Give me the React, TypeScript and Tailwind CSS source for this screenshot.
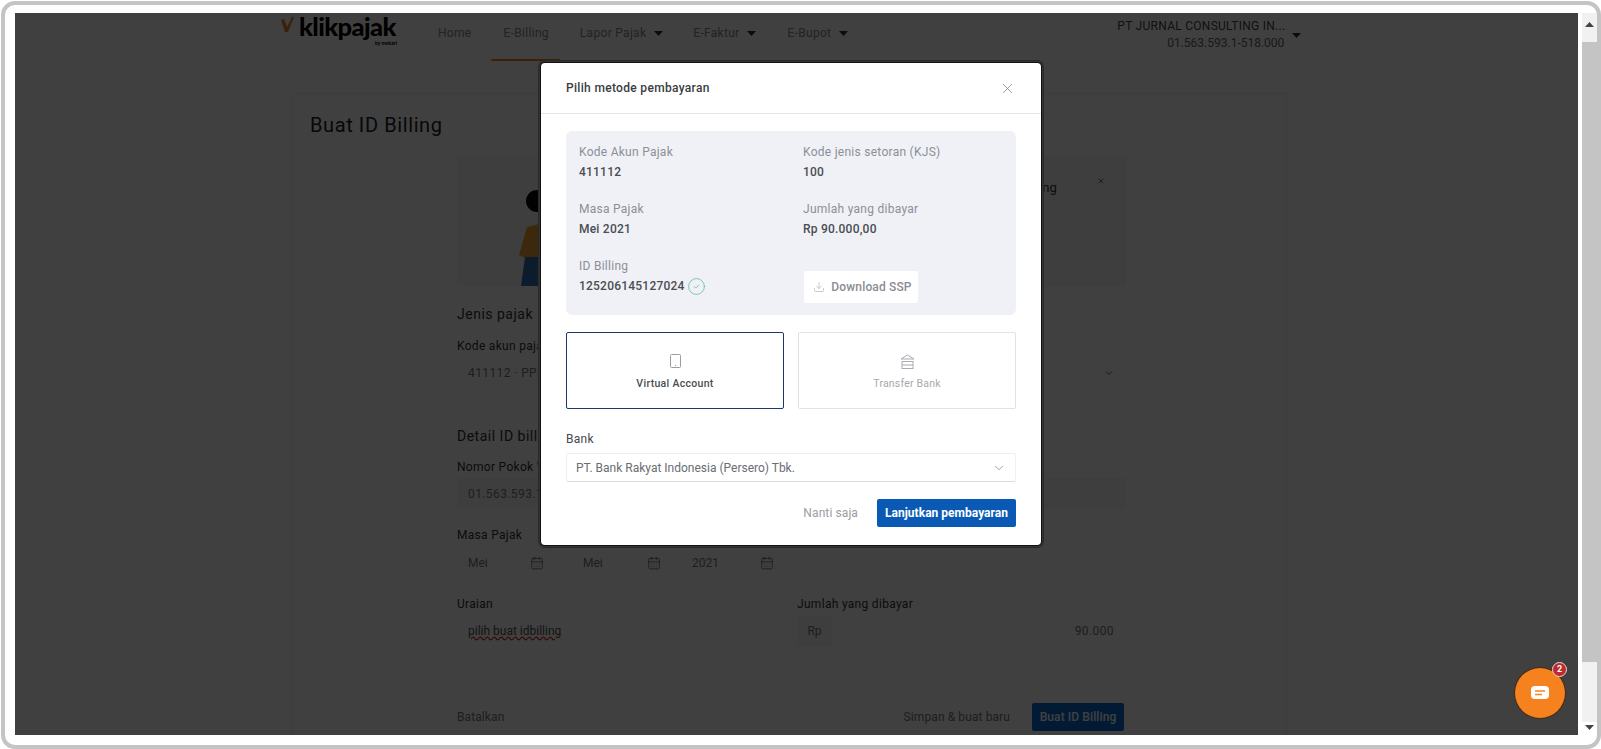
import React from "react";
import { X, ChevronDown, CircleCheck, CalendarDays, Download } from "lucide-react";

function Caret() {
  return (
    <svg width="9" height="5" viewBox="0 0 9 5" className="ml-[8px]">
      <path d="M0 0h9L4.5 5z" fill="#333" />
    </svg>
  );
}

function DateField({ text, cls }: { text: string; cls: string }) {
  return (
    <div className={"flex h-[32px] items-center justify-between pl-[11px] text-[12px] text-[#777] " + cls}>
      <span>{text}</span>
      <CalendarDays size={14} strokeWidth={1.2} color="#555" />
    </div>
  );
}

function Info({ label, value, extra }: { label: string; value: string; extra?: React.ReactNode }) {
  return (
    <div className="flex flex-col gap-[4px]">
      <div className="h-[16px] text-[12px] leading-[16px] tracking-[0.27px] text-[#8b8f98]">{label}</div>
      <div className="flex h-[16px] items-center text-[12px] font-medium leading-[16px] tracking-[0.22px] text-[#4a4d52]">
        {value}
        {extra}
      </div>
    </div>
  );
}

function PageContent() {
  return (
    <div className="flex h-full flex-col text-[#333]">
      <header className="flex h-[48px] shrink-0 items-start pl-[266px]">
        <div className="relative flex h-[40px] w-[121px] shrink-0 items-start">
          <svg width="13" height="16" viewBox="0 0 13 16" className="mt-[4px]">
            <path d="M0 3l3-1 3 8L11 0h2L7 15H4z" fill="#e8832a" />
          </svg>
          <span className="ml-[5px] font-['Lato',sans-serif] text-[25.5px] font-black leading-[27px] tracking-[-0.6px] text-black">klikpajak</span>
          <span className="absolute right-[5px] top-[27px] text-[5px] font-bold leading-[6px] text-[#222]">by mekari</span>
        </div>
        <nav className="ml-[36px] flex h-[48px] items-start pt-[12px] text-[12px] tracking-[0.3px] text-[#8a8a8a]">
          <span className="leading-[16px]">Home</span>
          <span className="relative ml-[32px] leading-[16px]">
            E-Billing
            <span className="absolute left-[-13px] right-[-11px] top-[34px] h-[2px] rounded-full bg-[#f08020]" />
          </span>
          <span className="ml-[31px] flex items-center leading-[16px]">Lapor Pajak<Caret /></span>
          <span className="ml-[30px] flex items-center leading-[16px]">E-Faktur<Caret /></span>
          <span className="ml-[31px] flex items-center leading-[16px]">E-Bupot<Caret /></span>
        </nav>
        <div className="ml-[269px] flex items-center pt-[5px]">
          <div className="w-[167px] text-right text-[12px] leading-[17px] tracking-[0.27px] text-[#444]">
            <div className="text-left whitespace-nowrap">PT JURNAL CONSULTING IN...</div>
            <div className="tracking-[0px] text-[#666]">01.563.593.1-518.000</div>
          </div>
          <Caret />
        </div>
      </header>

      <div className="ml-[277px] mt-[32px] flex w-[995px] flex-1 flex-col border-x border-t border-[#f0f0f0]">
        <h1 className="ml-[17px] mt-[18px] text-[20px] font-normal leading-[26px] tracking-[0.6px] text-[#222]">Buat ID Billing</h1>
        <div className="ml-[164px] mt-[19px] flex w-[669px] flex-col">
          <div className="relative flex h-[129px] items-start overflow-hidden bg-[#f8f8f8]">
            <svg width="90" height="129" viewBox="0 0 90 129" className="shrink-0">
              <circle cx="80" cy="44" r="11" fill="#0a0a0a" />
              <path d="M70 70l20-5v37H70l-8-4z" fill="#f0a030" />
              <path d="M68 100h22v29H64z" fill="#2d6fb5" />
            </svg>
            <div className="ml-[370px] mt-[22px] whitespace-nowrap text-[13px] leading-[18px] text-[#333]">Lihat cara buat ID Billing</div>
            <X size={8} className="absolute right-[21px] top-[20px]" color="#333" />
          </div>

          <div className="mt-[19px] text-[14px] leading-[18px] tracking-[0.5px] text-[#333]">Jenis pajak</div>
          <div className="mt-[15px] text-[12px] leading-[16px] tracking-[0.3px] text-[#333]">Kode akun pajak</div>
          <div className="mt-[3px] flex h-[32px] items-center justify-between pl-[11px] pr-[11px] text-[12px] tracking-[0.4px] text-[#777]">
            <span>411112 · PPN Dalam Negeri</span>
            <ChevronDown size={12} color="#666" />
          </div>

          <div className="mt-[38px] text-[14px] leading-[18px] tracking-[0.5px] text-[#333]">Detail ID billing</div>
          <div className="mt-[14px] text-[12px] leading-[16px] tracking-[0.3px] text-[#333]">Nomor Pokok Wajib Pajak</div>
          <div className="mt-[3px] grid h-[31px] grid-cols-[324px_328px] gap-[16px]">
            <div className="flex items-center bg-[#f8f8f8] pl-[11px] text-[12px] tracking-[0.4px] text-[#777]">01.563.593.1-518.000</div>
            <div className="bg-[#f8f8f8]" />
          </div>

          <div className="mt-[18px] text-[12px] leading-[16px] tracking-[0.3px] text-[#333]">Masa Pajak</div>
          <div className="mt-[4px] flex">
            <DateField text="Mei" cls="w-[87px] mr-[28px]" />
            <DateField text="Mei" cls="w-[89px] mr-[20px]" />
            <DateField text="2021" cls="w-[93px]" />
          </div>

          <div className="mt-[17px] grid grid-cols-[324px_328px] gap-[16px]">
            <div>
              <div className="text-[12px] leading-[16px] tracking-[0.3px] text-[#333]">Uraian</div>
              <div className="mt-[4px] flex h-[30px] items-center pl-[11px] text-[12px] text-[#555] underline decoration-[#d02020] decoration-wavy">pilih buat idbilling</div>
            </div>
            <div>
              <div className="text-[12px] leading-[16px] tracking-[0.3px] text-[#333]">Jumlah yang dibayar</div>
              <div className="mt-[4px] flex h-[30px] items-center text-[12px] text-[#777]">
                <div className="flex h-full w-[35px] items-center justify-center bg-[#f6f6f6]">Rp</div>
                <div className="flex-1 pr-[11px] text-right tracking-[0.4px]">90.000</div>
              </div>
            </div>
          </div>

          <div className="mt-[57px] flex items-center pr-[2px] text-[12px] tracking-[0.1px] text-[#777]">
            <span>Batalkan</span>
            <span className="ml-auto">Simpan &amp; buat baru</span>
            <span className="ml-[22px] flex h-[28px] w-[92px] items-center justify-center rounded-[2px] bg-[#0a6ad0] font-medium text-white">Buat ID Billing</span>
          </div>
        </div>
      </div>
    </div>
  );
}

function Modal() {
  return (
    <div className="absolute left-[526px] top-[50px] flex h-[482px] w-[500px] flex-col rounded-[4px] bg-white shadow-[0_0_0_1px_#111,0_0_0_2px_#333,0_0_0_3px_#2a2a2a]">
      <div className="flex h-[51px] shrink-0 items-center justify-between border-b border-[#e4e4e6] pl-[25px] pr-[25px]">
        <span className="text-[12px] font-medium tracking-[0.32px] text-[#3a3d42]">Pilih metode pembayaran</span>
        <X size={17} strokeWidth={1} color="#777" />
      </div>
      <div className="flex flex-1 flex-col px-[25px] pt-[17px]">
        <div className="grid h-[184px] grid-cols-[224px_1fr] content-start gap-y-[21px] rounded-[6px] bg-[#f0f1f6] pl-[13px] pt-[13px]">
          <Info label="Kode Akun Pajak" value="411112" />
          <Info label="Kode jenis setoran (KJS)" value="100" />
          <Info label="Masa Pajak" value="Mei 2021" />
          <Info label="Jumlah yang dibayar" value="Rp 90.000,00" />
          <Info
            label="ID Billing"
            value="125206145127024"
            extra={<CircleCheck size={19} strokeWidth={0.9} color="#4fb39a" className="ml-[2px] shrink-0" />}
          />
          <div className="ml-[1px] mt-[13px] flex h-[32px] w-[114px] items-center justify-center gap-[6px] rounded-[2px] bg-white pl-[3px] text-[12px] font-medium tracking-[0.15px] text-[#8a8d93]">
            <Download size={12} strokeWidth={1} color="#999" />
            Download SSP
          </div>
        </div>

        <div className="mt-[17px] grid h-[77px] grid-cols-[218px_218px] gap-[14px]">
          <div className="flex flex-col items-center justify-center gap-[9px] rounded-[2px] border-[1.5px] border-[#1b3a6b] pt-[4px]">
            <svg width="11" height="14" viewBox="0 0 11 14" fill="none" stroke="#9a9da2" strokeWidth="1">
              <rect x="0.5" y="0.5" width="10" height="13" rx="1" />
              <path d="M5 11.5h1" />
            </svg>
            <span className="text-[10.5px] font-medium leading-[14px] tracking-[0.3px] text-[#4a4d52]">Virtual Account</span>
          </div>
          <div className="flex flex-col items-center justify-center gap-[8px] rounded-[2px] border-[1.5px] border-[#e2e2e4] pt-[4px]">
            <svg width="15" height="15" viewBox="0 0 15 15" fill="none" stroke="#a8abb0" strokeWidth="1">
              <path d="M1 5 7.5 1 14 5z" />
              <rect x="2" y="7.5" width="11" height="7" />
              <path d="M2 11h11" />
            </svg>
            <span className="text-[10.5px] leading-[14px] tracking-[0.2px] text-[#a6a9ae]">Transfer Bank</span>
          </div>
        </div>

        <div className="mt-[22px] text-[12px] leading-[16px] tracking-[0.3px] text-[#44474c]">Bank</div>
        <div className="mt-[6px] flex h-[29px] items-center justify-between rounded-[2px] border border-[#f0f0f2] border-b-[#dcdcde] pl-[9px] pr-[9px] text-[12px] text-[#6a6d73]">
          <span>PT. Bank Rakyat Indonesia (Persero) Tbk.</span>
          <ChevronDown size={14} strokeWidth={1.2} color="#777" />
        </div>
        <div className="mt-[17px] flex items-center justify-end">
          <span className="text-[12px] tracking-[0.1px] text-[#9a9da2]">Nanti saja</span>
          <span className="ml-[19px] flex h-[28px] w-[139px] items-center justify-center rounded-[2px] bg-[#0a5ab5] text-[12px] font-bold tracking-[0.02px] text-white">Lanjutkan pembayaran</span>
        </div>
      </div>
    </div>
  );
}

function ChatWidget() {
  return (
    <div className="absolute bottom-[17px] right-[13px] flex h-[50px] w-[50px] items-center justify-center rounded-full bg-[#f5821f] shadow-[0_0_0_1px_#4a2a10]">
      <svg width="18" height="14" viewBox="0 0 18 14">
        <rect width="18" height="13" rx="4" fill="#fff" />
        <path d="M4 5h10M4 8.5h7" stroke="#f5821f" strokeWidth="1.3" />
      </svg>
      <span className="absolute right-[-2px] top-[-6px] flex h-[15px] w-[15px] items-center justify-center rounded-full border-[1.5px] border-[#ddd] bg-[#c0282c] text-[9px] font-bold leading-none text-white">2</span>
    </div>
  );
}

function Scrollbar() {
  return (
    <div className="ml-[4px] flex w-[15px] shrink-0 flex-col bg-[#c4c4c4]">
      <div className="flex h-[29px] justify-center bg-[#f1f1f1] pt-[9px]">
        <svg width="9" height="5" viewBox="0 0 9 5"><path d="M0 5h9L4.5 0z" fill="#444" /></svg>
      </div>
      <div className="flex-1" />
      <div className="flex h-[73px] flex-col bg-[#f1f1f1]">
        <div className="flex-1" />
        <div className="flex h-[13px] justify-center bg-white pt-[3px]">
          <svg width="9" height="5" viewBox="0 0 9 5"><path d="M0 0h9L4.5 5z" fill="#444" /></svg>
        </div>
      </div>
    </div>
  );
}

export default function App() {
  return (
    <div className="h-[749px] w-[1601px] overflow-hidden bg-white pl-px pt-px font-['Roboto',sans-serif]">
      <div className="flex h-[748px] w-[1600px] rounded-[14px] border-4 border-[#c4c4c4] pb-[10px] pl-[10px] pt-[8px]">
        <div className="relative min-w-0 flex-1 overflow-hidden bg-white">
          <PageContent />
          <div className="absolute inset-0 bg-black/75" />
          <Modal />
          <ChatWidget />
        </div>
        <Scrollbar />
      </div>
    </div>
  );
}
